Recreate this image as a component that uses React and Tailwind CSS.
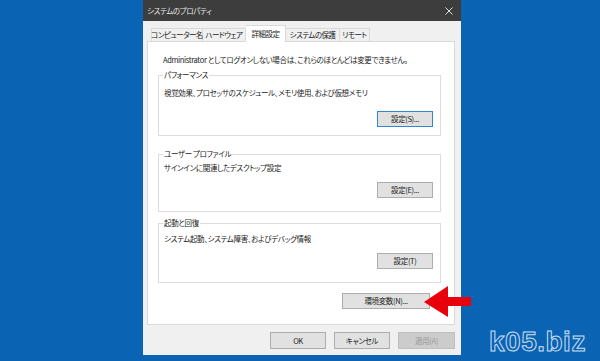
import React from "react";

function Btn({ children, w = "w-[56px]", h = "h-[16px]", focus = false, disabled = false }) {
  return (
    <div
      className={
        "flex items-center justify-center whitespace-nowrap border text-[7.5px] leading-[12px] " +
        w + " " + h + " " +
        (disabled
          ? "bg-[#cccccc] border-[#bfbfbf] text-[#9a9a9a]"
          : focus
          ? "bg-[#e1e1e1] border-[#2f86d6] text-[#1a1a1a]"
          : "bg-[#e1e1e1] border-[#adadad] text-[#1a1a1a]")
      }
    >
      {children}
    </div>
  );
}

function Group({ title, desc, btn, focus, h, mt, descMt, btnMt }) {
  return (
    <fieldset className={"ml-[10px] w-[283px] border border-[#dcdcdc] " + h + " " + mt}>
      <legend className="ml-[4px] px-[1px] text-[7.5px] leading-[12px] text-[#1a1a1a]">{title}</legend>
      <div className={"whitespace-nowrap pl-[5px] text-[7.5px] leading-[12px] text-[#1a1a1a] " + descMt}>{desc}</div>
      <div className={"flex justify-end pr-[7px] " + btnMt}>
        <Btn focus={focus}>{btn}</Btn>
      </div>
    </fieldset>
  );
}

export default function App() {
  const tab = "flex items-center justify-center whitespace-nowrap border border-b-0 border-[#d9d9d9] text-[7.5px] leading-[12px] tracking-[-0.55px] text-[#1a1a1a]";
  return (
    <div className="relative w-[600px] h-[361px] overflow-hidden bg-[#0a63b3] font-['Noto_Sans_CJK_JP','Noto_Sans',sans-serif] tracking-[-0.35px] [font-feature-settings:'palt']">
      <div className="pl-[143px]">
        <div className="flex h-[355px] w-[318px] flex-col bg-[#f0f0f0]">
          {/* title bar */}
          <div className="flex h-[21px] items-center justify-between bg-[#3d3d3d] pl-[4px] pr-[8px]">
            <span className="text-[7.5px] leading-[12px] text-[#e6e6e6]">システムのプロパティ</span>
            <svg width="8" height="8" viewBox="0 0 8 8">
              <path d="M0.5 0.5L7.5 7.5M7.5 0.5L0.5 7.5" stroke="#e0e0e0" strokeWidth="1" />
            </svg>
          </div>
          {/* tabs */}
          <div className="mt-[4px] flex h-[16px] items-end pl-[8px]">
            <div className={tab + " h-[13px] w-[52px] bg-[#f0f0f0]"}>コンピューター名</div>
            <div className={tab + " h-[13px] w-[43px] border-l-0 bg-[#f0f0f0]"}>ハードウェア</div>
            <div className={tab + " relative z-10 mb-[-1px] h-[17px] w-[40px] border-l-0 bg-white"}>詳細設定</div>
            <div className={tab + " h-[13px] w-[54px] border-l-0 bg-[#f0f0f0]"}>システムの保護</div>
            <div className={tab + " h-[13px] w-[30px] border-l-0 bg-[#f0f0f0]"}>リモート</div>
          </div>
          {/* panel */}
          <div className="ml-[4px] flex h-[284px] w-[308px] flex-col border border-[#d9d9d9] bg-white">
            <div className="whitespace-nowrap pl-[15px] pt-[12px] text-[7.5px] leading-[12px] text-[#1a1a1a]">
              Administrator としてログオンしない場合は、これらのほとんどは変更できません。
            </div>
            <Group
              title="パフォーマンス"
              desc="視覚効果、プロセッサのスケジュール、メモリ使用、および仮想メモリ"
              btn="設定(S)..."
              focus
              h="h-[67px]"
              mt="mt-[3px]"
              descMt="mt-[6px]"
              btnMt="mt-[12px]"
            />
            <Group
              title="ユーザー プロファイル"
              desc="サインインに関連したデスクトップ設定"
              btn="設定(E)..."
              h="h-[64px]"
              mt="mt-[12px]"
              descMt="mt-[2px]"
              btnMt="mt-[8px]"
            />
            <Group
              title="起動と回復"
              desc="システム起動、システム障害、およびデバッグ情報"
              btn="設定(T)"
              h="h-[66px]"
              mt="mt-[5px]"
              descMt="mt-[4px]"
              btnMt="mt-[8px]"
            />
            <div className="ml-[194px] mt-[10px]">
              <Btn w="w-[88px]">環境変数(N)...</Btn>
            </div>
          </div>
          {/* bottom buttons */}
          <div className="mt-[7px] flex justify-end gap-[8px] pr-[6px]">
            <Btn h="h-[17px]">OK</Btn>
            <Btn h="h-[17px]">キャンセル</Btn>
            <Btn h="h-[17px]" w="w-[57px]" disabled>適用(A)</Btn>
          </div>
        </div>
      </div>

      {/* red arrow */}
      <svg className="absolute left-[420px] top-[282px]" width="56" height="40" viewBox="0 0 56 40">
        <polygon points="4,20 28,4 28,15 51,15 51,24 28,24 28,35" fill="#e8000b" />
      </svg>

      {/* watermark */}
      <div className="absolute left-[489px] top-[326px] font-['Liberation_Sans',sans-serif] text-[28px] font-bold leading-[32px] tracking-[0.5px] text-transparent [-webkit-text-stroke:1px_#c9def2] [font-feature-settings:normal]">
        k05.biz
      </div>
    </div>
  );
}
